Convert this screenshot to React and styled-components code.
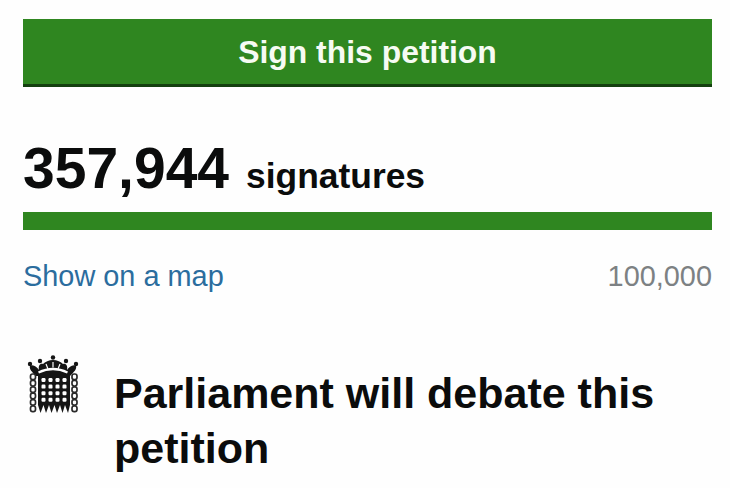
import React from "react";
import styled, { createGlobalStyle } from "styled-components";

const GlobalStyle = createGlobalStyle`
  html, body {
    margin: 0;
    padding: 0;
    background: #fff;
  }
`;

const Page = styled.div`
  width: 730px;
  height: 488px;
  overflow: hidden;
  box-sizing: border-box;
  padding: 19px 18px 0 23px;
  font-family: "Liberation Sans", Arial, sans-serif;
  color: #0b0c0c;
  background: #fefefe;
`;

const SignButton = styled.button`
  display: block;
  width: 100%;
  height: 68px;
  padding: 3px 0 0;
  border: 0;
  border-bottom: 3px solid #14400f;
  background: #2f8620;
  color: #f6fbf3;
  font: 700 31.9px/1 "Liberation Sans", Arial, sans-serif;
`;

const Count = styled.div`
  display: flex;
  align-items: baseline;
  gap: 17px;
  margin-top: 42px;
  height: 83px;
`;

const Number = styled.span`
  font-size: 57px;
  line-height: 79px;
  font-weight: 700;
`;

const Label = styled.span`
  font-size: 35.4px;
  font-weight: 700;
`;

const Progress = styled.div`
  height: 18px;
  background: #2f8620;
`;

const Meta = styled.div`
  display: flex;
  justify-content: space-between;
  align-items: center;
  margin-top: 28px;
  height: 36px;
  font-size: 28.9px;
`;

const MapLink = styled.a`
  color: #2b6d9e;
  text-decoration: none;
`;

const Goal = styled.span`
  color: #7d8183;
`;

const Response = styled.div`
  display: flex;
  align-items: flex-start;
  gap: 33px;
  margin-top: 61px;
`;

const Crest = styled.svg`
  flex: none;
  width: 56px;
  height: 60px;
  margin: 0 0 0 2px;
`;

const Heading = styled.h2`
  margin: 11px 0 0;
  font-size: 43px;
  line-height: 55px;
  font-weight: 700;
`;

const chainLinks = [0, 1, 2, 3, 4, 5];
const gridCols = [0, 1, 2, 3];
const gridRows = [0, 1, 2, 3];
const crownBalls = [
  [5, 9],
  [15, 6],
  [28, 2.5],
  [41, 6],
  [51, 9],
];

function Portcullis() {
  return (
    <Crest viewBox="0 0 56 60" aria-hidden="true">
      {/* crown */}
      <path
        d="M11 21 C7 17 4 14 5 11 C8 9 12 12 14 15 C13 11 15 8 18 9 C20 7 24 5 28 5 C32 5 36 7 38 9 C41 8 43 11 42 15 C44 12 48 9 51 11 C52 14 49 17 45 21 Z"
        fill="#151515"
      />
      {crownBalls.map(([cx, cy]) => (
        <circle key={cx} cx={cx} cy={cy} r="2.2" fill="#151515" />
      ))}
      <path d="M13 16.5 Q28 9 43 16.5 L42 18.5 Q28 12 14 18.5 Z" fill="#fff" />
      <path d="M21 9 L23 14 M28 7 V12.5 M35 9 L33 14" stroke="#fff" strokeWidth="1.2" />
      {/* chains */}
      {chainLinks.map((i) => (
        <g key={i} fill="none" stroke="#2a2a2a" strokeWidth="1.7">
          <rect x="5.5" y={19 + i * 6.4} width="5" height="5.6" rx="2.2" />
          <rect x="47" y={19 + i * 6.4} width="5" height="5.6" rx="2.2" />
        </g>
      ))}
      {/* gate */}
      <path
        d="M13 19 H45 V50 L43 58 L40 50 L37.5 58 L35 50 L32 58 L29.5 50 L26.5 58 L24 50 L21 58 L18.5 50 L15.5 58 L13 50 Z"
        fill="#151515"
      />
      {gridRows.map((r) =>
        gridCols.map((c) => (
          <rect
            key={`${r}-${c}`}
            x={16.5 + c * 7}
            y={23 + r * 6.6}
            width="4"
            height="4"
            rx="1.2"
            fill="#fff"
          />
        ))
      )}
    </Crest>
  );
}

export default function App() {
  return (
    <Page>
      <GlobalStyle />
      <SignButton>Sign this petition</SignButton>
      <Count>
        <Number>357,944</Number>
        <Label>signatures</Label>
      </Count>
      <Progress />
      <Meta>
        <MapLink href="#">Show on a map</MapLink>
        <Goal>100,000</Goal>
      </Meta>
      <Response>
        <Portcullis />
        <Heading>Parliament will debate this petition</Heading>
      </Response>
    </Page>
  );
}
